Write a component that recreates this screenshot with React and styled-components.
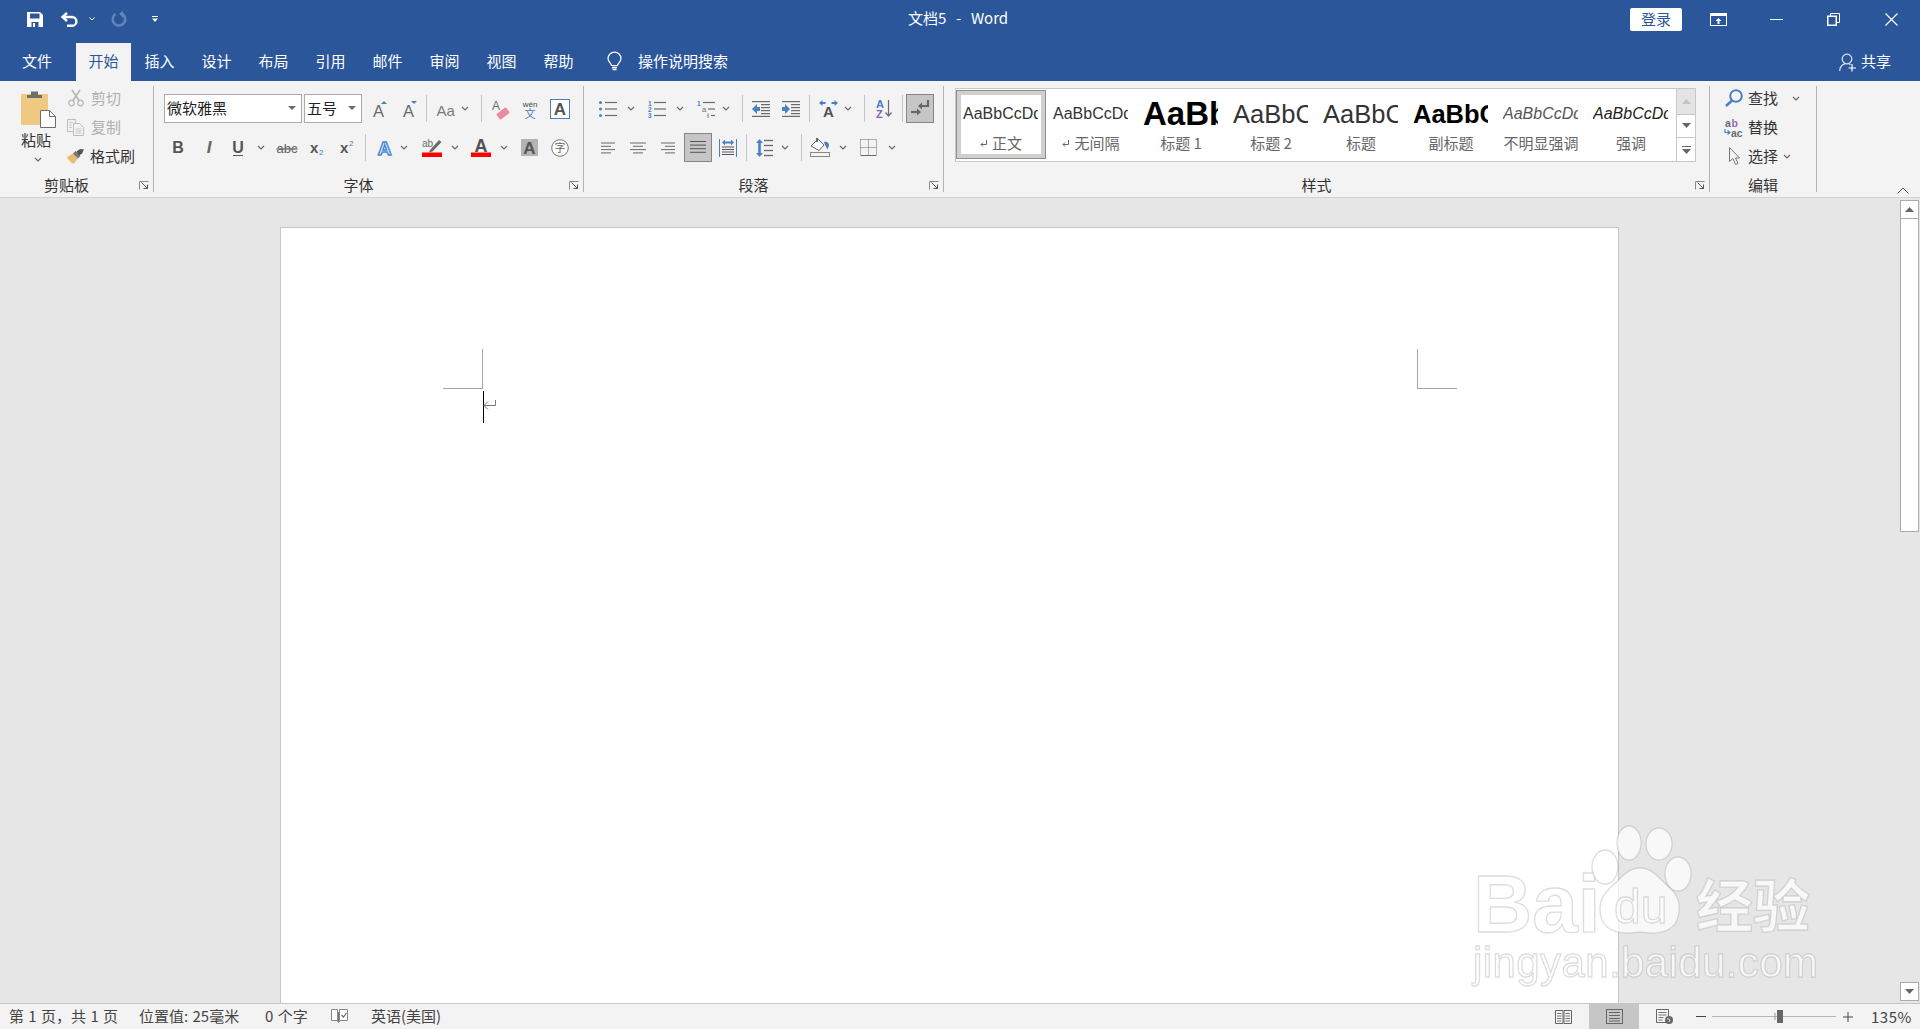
import React from 'react';
import styled, { createGlobalStyle } from 'styled-components';

const GlobalStyle = createGlobalStyle`
  html, body, #root { margin: 0; padding: 0; height: 100%; overflow: hidden; }
  body { font-family: "Noto Sans CJK SC", "Liberation Sans", sans-serif; color: #333; }
  svg { display: block; overflow: visible; }
`;

const Window = styled.div`
  width: 1920px;
  height: 1029px;
  display: flex;
  flex-direction: column;
  overflow: hidden;
  background: #e6e6e6;
`;

const Header = styled.header`
  background: #2b579a;
  color: #fff;
  font-size: 15px;
  line-height: 18px;
  flex: none;
`;

const TitleBar = styled.div`
  height: 38px;
  margin-bottom: 5px;
  display: grid;
  grid-template-columns: 1fr auto 1fr;
  align-items: center;
`;

const QuickAccess = styled.div`
  display: flex;
  align-items: center;
  padding-left: 27px;
`;

const DocTitle = styled.div`
  font-size: 15px;
  padding: 0 4px 2px 0;
  white-space: pre;
  word-spacing: 1.5px;
`;

const WindowControls = styled.div`
  display: flex;
  align-items: center;
  justify-content: flex-end;
`;

const LoginButton = styled.button`
  width: 52px;
  height: 23px;
  margin-right: 8px;
  border: none;
  border-radius: 2px;
  background: #fff;
  color: #2b579a;
  font: 15px/21px "Noto Sans CJK SC", sans-serif;
  padding: 0 0 2px;
`;

const WinButton = styled.div`
  width: 57.5px;
  height: 38px;
  display: flex;
  align-items: center;
  justify-content: center;
`;

const TabRow = styled.nav`
  height: 38px;
  display: flex;
  align-items: stretch;
`;

const Tab = styled.div`
  width: ${p => p.$w || 57}px;
  margin-left: ${p => p.$ml || 0}px;
  padding-bottom: 2px;
  box-sizing: border-box;
  display: flex;
  align-items: center;
  justify-content: center;
  background: ${p => (p.$active ? '#f3f3f3' : 'transparent')};
  color: ${p => (p.$active ? '#2b579a' : '#fff')};
`;

const SearchBox = styled.div`
  margin-left: 20px;
  padding-bottom: 2px;
  display: flex;
  align-items: center;
  gap: 16px;
`;

const BulbWrap = styled.div`
  margin-top: 2px;
`;

const ShareBox = styled.div`
  margin-left: auto;
  padding: 0 29px 2px 0;
  display: flex;
  align-items: center;
  gap: 4px;
`;

const Ribbon = styled.section`
  height: 116px;
  flex: none;
  display: flex;
  background: #f3f3f3;
  border-bottom: 1px solid #d2d2d2;
  font-size: 15px;
  line-height: 18px;
`;

const Group = styled.div`
  width: ${p => p.$w}px;
  height: 106px;
  margin-top: 5px;
  flex: none;
  display: flex;
  flex-direction: column;
  border-right: 1px solid #b4b4b4;
  box-sizing: border-box;
`;

const GroupBody = styled.div`
  flex: 1;
  min-height: 0;
  display: flex;
`;

const GroupFooter = styled.div`
  height: 16px;
  display: flex;
  align-items: flex-start;
  color: #333;
  line-height: 17px;
`;

const GroupLabel = styled.div`
  flex: 1;
  text-align: center;
`;

const Launcher = styled.div`
  width: 20px;
  padding: 5px 0 0 6px;
  box-sizing: border-box;
`;

const PasteColumn = styled.div`
  width: 67px;
  padding: 4px 0 0 21px;
  box-sizing: border-box;
  display: flex;
  flex-direction: column;
`;

const PasteLabel = styled.div`
  margin-top: 2px;
  line-height: 20px;
`;

const PasteChevron = styled.div`
  margin: 7px 0 0 13px;
`;

const CommandColumn = styled.div`
  display: flex;
  flex-direction: column;
  gap: 5px;
`;

const CommandRow = styled.div`
  height: 24px;
  display: flex;
  align-items: center;
  color: ${p => (p.$disabled ? '#b0b0b0' : '#333')};
`;

const ToolStack = styled.div`
  padding: 8px 0 0 ${p => p.$pad || 0}px;
  display: flex;
  flex-direction: column;
  gap: 10px;
`;

const ToolRow = styled.div`
  height: 29px;
  display: flex;
  align-items: center;
`;

const Tool = styled.span`
  width: ${p => p.$w}px;
  margin-left: ${p => p.$ml || 0}px;
  flex: none;
  display: flex;
  align-items: center;
  justify-content: center;
`;

const ToggledTool = styled(Tool)`
  height: 29px;
  box-sizing: border-box;
  background: #c6c6c6;
  border: 1px solid #858585;
`;

const Divider = styled.span`
  width: 1px;
  height: 27px;
  margin-left: ${p => p.$ml}px;
  flex: none;
  background: #c6c6c6;
`;

const Combo = styled.div`
  width: ${p => p.$w}px;
  height: 29px;
  margin-left: ${p => p.$ml || 0}px;
  flex: none;
  box-sizing: border-box;
  background: #fff;
  border: 1px solid #ababab;
  padding: 0 5px 2px 2px;
  display: flex;
  align-items: center;
  justify-content: space-between;
  color: #222;
`;

const Gallery = styled.div`
  width: 741px;
  height: 74px;
  margin: 2px 0 0 11px;
  box-sizing: border-box;
  display: flex;
  background: #fff;
  border: 1px solid #c8c8c8;
`;

const StyleItem = styled.div`
  width: 90px;
  height: 69px;
  margin-top: 1px;
  flex: none;
  padding-top: 3px;
  box-sizing: border-box;
  box-shadow: ${p => (p.$selected ? 'inset 0 0 0 1px #8f8f8f, inset 0 0 0 5px #cfcfcd' : 'none')};
`;

const StylePreview = styled.div`
  width: 75px;
  height: 42px;
  margin-left: 7px;
  overflow: hidden;
  white-space: nowrap;
  display: flex;
  align-items: center;
  font-family: "Liberation Sans", sans-serif;
  font-size: ${p => p.$size}px;
  font-weight: ${p => (p.$bold ? 700 : 400)};
  font-style: ${p => (p.$italic ? 'italic' : 'normal')};
  color: ${p => p.$color || '#333'};
`;

const StyleLabel = styled.div`
  display: flex;
  align-items: center;
  justify-content: center;
  gap: 5px;
  line-height: 16px;
  font-size: 15px;
  color: #666;
`;

const GalleryScroll = styled.div`
  width: 18px;
  margin-left: auto;
  flex: none;
  display: flex;
  flex-direction: column;
  border-left: 1px solid #c8c8c8;
`;

const ScrollCell = styled.div`
  flex: ${p => p.$flex || 1};
  display: flex;
  align-items: center;
  justify-content: center;
  background: ${p => (p.$muted ? '#e4e4e4' : '#fff')};
  border-top: ${p => (p.$first ? 'none' : '1px solid #c8c8c8')};
`;

const RibbonTail = styled.div`
  flex: 1;
  display: flex;
  align-items: flex-end;
  justify-content: flex-end;
  padding: 0 11px 3px 0;
`;

const Workspace = styled.main`
  flex: 1;
  min-height: 0;
  position: relative;
  display: flex;
  overflow: hidden;
  background: #e6e6e6;
`;

const Page = styled.div`
  width: 1339px;
  margin: 29px 0 0 280px;
  flex: none;
  box-sizing: border-box;
  background: #fff;
  border: 1px solid #c6c6c6;
  border-bottom: none;
  padding-top: 121px;
`;

const CropRow = styled.div`
  display: flex;
  justify-content: space-between;
  padding: 0 161px 0 162px;
`;

const CropMark = styled.div`
  width: 39px;
  height: 39px;
  border-bottom: 1px solid #a6a6a6;
  ${p => (p.$right ? 'border-left' : 'border-right')}: 1px solid #a6a6a6;
`;

const TextLine = styled.div`
  margin: 2px 0 0 202px;
  display: flex;
`;

const Caret = styled.div`
  width: 1px;
  height: 32px;
  background: #000;
`;

const Pilcrow = styled.div`
  margin: 9px 0 0 -1px;
`;

const Scrollbar = styled.div`
  width: 19px;
  margin: 2px 1px 2px auto;
  flex: none;
  display: flex;
  flex-direction: column;
`;

const ScrollButton = styled.div`
  height: 19px;
  flex: none;
  margin-top: ${p => (p.$end ? 'auto' : 0)};
  box-sizing: border-box;
  background: #fff;
  border: 1px solid #ababab;
  display: flex;
  align-items: center;
  justify-content: center;
`;

const ScrollThumb = styled.div`
  height: 313px;
  flex: none;
  box-sizing: border-box;
  background: #fff;
  border: 1px solid #ababab;
  border-top: none;
`;

const Watermark = styled.div`
  position: absolute;
  left: 1465px;
  top: 620px;
  pointer-events: none;
`;

const StatusBar = styled.footer`
  height: 26px;
  flex: none;
  box-sizing: border-box;
  display: flex;
  align-items: stretch;
  background: #f3f3f3;
  border-top: 1px solid #c6c6c6;
  padding-left: 9px;
  font-size: 15px;
  line-height: 25px;
  color: #444;
`;

const StatusItem = styled.div`
  width: ${p => p.$w}px;
  flex: none;
  display: flex;
  align-items: center;
  padding-bottom: 2px;
  box-sizing: border-box;
  white-space: pre;
  word-spacing: 1px;
`;

const StatusRight = styled.div`
  margin-left: auto;
  display: flex;
  align-items: stretch;
`;

const ViewButton = styled.div`
  width: ${p => p.$w}px;
  margin-left: ${p => p.$ml || 0}px;
  flex: none;
  display: flex;
  align-items: center;
  justify-content: center;
  background: ${p => (p.$active ? '#c6c6c6' : 'transparent')};
`;

const ZoomTrack = styled.div`
  width: 124px;
  margin-left: 6px;
  flex: none;
  display: flex;
  align-items: center;
`;

const ZoomValue = styled.div`
  width: 49px;
  margin-left: 18px;
  letter-spacing: 0.5px;
`;

const GRAY = '#6a6a6a';
const BLUE = '#4a80bf';
const LATIN = '"Liberation Sans", sans-serif';

const Svg = ({ w, h, children }) => (
  <svg width={w} height={h} viewBox={`0 0 ${w} ${h}`} fill="none">{children}</svg>
);

const Chev = () => (
  <Svg w={8} h={5}><path d="M1 1l3 3 3-3" stroke={GRAY} strokeWidth="1.2" /></Svg>
);
const ChevTool = ({ ml }) => <Tool $w={8} $ml={ml}><Chev /></Tool>;
const Tri = () => <Svg w={8} h={4}><path d="M0 0h8L4 4z" fill={GRAY} /></Svg>;

const LauncherIcon = () => (
  <Svg w={10} h={9}>
    <path d="M.5 8.5v-8h9" stroke="#8a8a8a" />
    <path d="M2.5 1.5l6 6M8.5 3.5v4h-4" stroke="#555" />
  </Svg>
);

const Lines = ({ w, ys, x = 0, color = GRAY, sw = 1.2 }) =>
  ys.map(y => <path key={y} d={`M${x} ${y}h${w}`} stroke={color} strokeWidth={sw} />);

const SaveIcon = () => (
  <Svg w={16} h={15}>
    <path d="M0 0h13l3 3v12H0z" fill="#fff" />
    <path d="M3 1.5h9.5v5H3z" fill="#2b579a" />
    <path d="M4.5 10h7v5h-7z" fill="#2b579a" />
    <path d="M6 11h2v4H6z" fill="#fff" />
  </Svg>
);
const UndoIcon = () => (
  <Svg w={17} h={15}>
    <path d="M6 1L1.500 5 6 9" stroke="#fff" strokeWidth="2.400" />
    <path d="M2.500 5H11a4.400 4.400 0 0 1 0 8.800H6" stroke="#fff" strokeWidth="2.400" />
  </Svg>
);
const RedoIcon = () => (
  <Svg w={16} h={16}>
    <path d="M4.500 3a6.300 6.300 0 1 0 6 -.5" stroke="#6384b8" strokeWidth="2.600" />
    <path d="M12 0v7L8 2.500z" fill="#6384b8" />
  </Svg>
);
const CustomizeIcon = () => (
  <Svg w={6} h={6}>
    <path d="M0 .5h6" stroke="#fff" />
    <path d="M0 2.5h6L3 6z" fill="#fff" />
  </Svg>
);
const BulbIcon = () => (
  <Svg w={15} h={20}>
    <path d="M4.500 13.500C4 11 1 9.800 1 6.600a6.500 6.500 0 0 1 13 0c0 3.200-3 4.400-3.500 6.900z" stroke="#fff" strokeWidth="1.200" />
    <path d="M5 15.500h5M5.500 17.500h4" stroke="#fff" strokeWidth="1.300" />
  </Svg>
);
const RibbonDisplayIcon = () => (
  <Svg w={17} h={13}>
    <rect x=".5" y=".5" width="16" height="12" stroke="#fff" />
    <path d="M1 1h15v2H1z" fill="#fff" />
    <path d="M8.500 5l3 3h-2v3h-2V8h-2z" fill="#fff" />
  </Svg>
);
const MinimizeIcon = () => <Svg w={13} h={1}><path d="M0 .5h13" stroke="#fff" /></Svg>;
const RestoreIcon = () => (
  <Svg w={13} h={13}>
    <path d="M3.500 3V.5h9v9H10" stroke="#fff" />
    <rect x=".75" y="3.250" width="8.500" height="9" stroke="#fff" strokeWidth="1.500" />
  </Svg>
);
const CloseIcon = () => <Svg w={13} h={13}><path d="M.5.5l12 12M12.500.5l-12 12" stroke="#fff" strokeWidth="1.200" /></Svg>;
const ShareIcon = () => (
  <Svg w={18} h={19}>
    <circle cx="8" cy="6" r="4.800" stroke="#dfe7f3" strokeWidth="1.200" />
    <path d="M.7 18c0-4 2.600-6.500 5.500-7.400M10 11l1.500.6" stroke="#dfe7f3" strokeWidth="1.200" />
    <path d="M13 11v7.500M9.500 15h7.500" stroke="#fff" strokeWidth="1.200" />
  </Svg>
);

const PasteIcon = () => (
  <Svg w={35} h={38}>
    <rect x="0" y="4" width="27" height="31" rx="1" fill="#efc981" />
    <path d="M6 5h15v3H6zM10 1.500h7V5h-7z" fill="#6e6e6e" />
    <path d="M19.500 20.500h9l6 6v11h-15z" fill="#fff" stroke="#6e6e6e" />
    <path d="M28.500 20.500v6h6" stroke="#6e6e6e" />
  </Svg>
);
const ScissorsIcon = () => (
  <Svg w={16} h={18}>
    <circle cx="3.500" cy="14" r="2.700" stroke="#bdbdbd" strokeWidth="1.400" />
    <circle cx="12.500" cy="14" r="2.700" stroke="#bdbdbd" strokeWidth="1.400" />
    <path d="M5 11.500L12 1M11 11.500L4 1" stroke="#b5b5b5" strokeWidth="1.600" />
  </Svg>
);
const CopyIcon = () => (
  <Svg w={17} h={17}>
    <path d="M.5.5h8v12h-8z" fill="#f3f3f3" stroke="#bdbdbd" />
    <path d="M6.500 4.500h6l4 4v8h-10z" fill="#f3f3f3" stroke="#bdbdbd" />
    <path d="M2 3.500h4M2 6h3M2 8.500h3M8.500 10h6M8.500 12h6M8.500 14h6" stroke="#c8c8c8" />
  </Svg>
);
const BrushIcon = () => (
  <Svg w={18} h={15}>
    <path d="M0 8l6-3.500 5 5-4.500 5.500C5 14 2 12 0 8z" fill="#e8bd73" />
    <path d="M6 4.500L8.500 2l5 5-2.500 2.500z" fill="#777" />
    <path d="M9.500 2.500L13 0l4 .5-2 4-3 2z" fill="#555" />
  </Svg>
);

const GrowIcon = ({ down }) => (
  <Svg w={14} h={16}>
    <text x="0" y="16" fontFamily={LATIN} fontSize="16.500" fill={GRAY}>A</text>
    <path d={down ? 'M8 0h6l-3 3z' : 'M8 3h6l-3-3z'} fill={BLUE} />
  </Svg>
);
const CaseIcon = () => (
  <Svg w={17} h={14}>
    <text x="-.5" y="13.500" fontFamily={LATIN} fontSize="15" fill="#7a7a7a">Aa</text>
  </Svg>
);
const EraserIcon = () => (
  <Svg w={18} h={20}>
    <text x="0" y="11" fontFamily={LATIN} fontSize="12" fill={GRAY}>A</text>
    <rect x="5" y="11" width="12" height="7" rx="1" fill="#e88c9e" transform="rotate(-38 11 14.500)" />
  </Svg>
);
const PinyinIcon = () => (
  <Svg w={16} h={18}>
    <text x="8" y="7" textAnchor="middle" fontFamily={LATIN} fontSize="8" fill="#444">wén</text>
    <text x="8" y="18" textAnchor="middle" fontFamily='"Noto Sans CJK SC"' fontSize="11" fill={BLUE}>文</text>
  </Svg>
);
const BorderAIcon = () => (
  <Svg w={20} h={20}>
    <rect x=".5" y=".5" width="19" height="19" fill="#fff" stroke={BLUE} />
    <text x="10" y="16" textAnchor="middle" fontFamily={LATIN} fontWeight="700" fontSize="17" fill="#555">A</text>
  </Svg>
);
const Letter = ({ w, children, color = '#555', size = 16, bold, italic, underline, through }) => (
  <Svg w={w} h={16}>
    <text x={w / 2} y="13" textAnchor="middle" fontFamily={LATIN} fontSize={size} fontWeight={bold ? 700 : 400}
      fontStyle={italic ? 'italic' : 'normal'} fill={color} textDecoration={through ? 'line-through' : 'none'}>{children}</text>
    {underline && <path d={`M0 15.500h${w}`} stroke={color} />}
  </Svg>
);
const ScriptIcon = ({ sup }) => (
  <Svg w={15} h={15}>
    <text x="0" y="13" fontFamily={LATIN} fontWeight="700" fontSize="15" fill="#555">x</text>
    <text x="9" y={sup ? 6 : 15} fontFamily={LATIN} fontSize="8" fill={BLUE}>2</text>
  </Svg>
);
const EffectIcon = () => (
  <Svg w={15} h={18}>
    <text x="7.500" y="16" textAnchor="middle" fontFamily={LATIN} fontWeight="700" fontSize="19" fill="#fff" stroke="#4a8ad4" strokeWidth="1.500">A</text>
  </Svg>
);
const HighlightIcon = () => (
  <Svg w={20} h={19}>
    <text x="0" y="9" fontFamily={LATIN} fontSize="10" fill={GRAY}>ab</text>
    <path d="M8 12L17 2l2.500 2-9 9.500-3.500 1z" fill={GRAY} />
    <path d="M0 14.500h20V19H0z" fill="#f00" />
  </Svg>
);
const FontColorIcon = () => (
  <Svg w={20} h={19}>
    <text x="10" y="13.500" textAnchor="middle" fontFamily={LATIN} fontWeight="700" fontSize="18" fill="#505050">A</text>
    <path d="M0 14.500h20V19H0z" fill="#f00" />
  </Svg>
);
const ShadedIcon = () => (
  <Svg w={17} h={17}>
    <rect width="17" height="17" fill="#b4b4b4" />
    <text x="8.500" y="15" textAnchor="middle" fontFamily={LATIN} fontWeight="700" fontSize="17" fill="#555">A</text>
  </Svg>
);
const CircleIcon = () => (
  <Svg w={18} h={18}>
    <circle cx="9" cy="9" r="8.300" stroke="#777" fill="#fff" />
    <text x="9" y="13" textAnchor="middle" fontFamily='"Noto Sans CJK SC"' fontSize="11" fill="#666">字</text>
  </Svg>
);

const BulletsIcon = () => (
  <Svg w={18} h={18}>
    {[2.500, 9, 15.500].map(y => <circle key={y} cx="1.500" cy={y} r="1.500" fill={BLUE} />)}
    <Lines x={6} w={12} ys={[2.500, 9, 15.500]} />
  </Svg>
);
const NumberedIcon = ({ labels = ['1', '2', '3'] }) => (
  <Svg w={18} h={18}>
    {labels.map((t, i) => (
      <text key={t} x="0" y={5.500 + i * 6.300} fontFamily={LATIN} fontWeight="700" fontSize="6.500" fill={BLUE}>{t}</text>
    ))}
    <Lines x={6} w={12} ys={[2.500, 9, 15.500]} />
  </Svg>
);
const MultilevelIcon = () => (
  <Svg w={18} h={18}>
    <text x="0" y="6" fontFamily={LATIN} fontWeight="700" fontSize="6.500" fill={BLUE}>1</text>
    <text x="5" y="12" fontFamily={LATIN} fontSize="7.500" fill={GRAY}>a</text>
    <text x="10" y="18" fontFamily={LATIN} fontWeight="700" fontSize="6.500" fill={BLUE}>i</text>
    <Lines x={6} w={12} ys={[2.500]} />
    <Lines x={11} w={7} ys={[9]} />
    <Lines x={14} w={4} ys={[15.500]} />
  </Svg>
);
const IndentIcon = ({ out }) => (
  <Svg w={18} h={16}>
    <Lines w={18} ys={[.600, 15.400]} />
    <Lines x={9} w={9} ys={[3.600, 6.600, 9.600, 12.600]} />
    <path d={out ? 'M5 3L0 8l5 5v-3h3V6H5z' : 'M3 3l5 5-5 5v-3H0V6h3z'} fill={BLUE} />
  </Svg>
);
const TextDirIcon = () => (
  <Svg w={19} h={17}>
    <path d="M0 3l3.500-3v2h3v2h-3v2zM19 3l-3.500-3v2h-3v2h3v2z" fill={BLUE} />
    <text x="9.500" y="17" textAnchor="middle" fontFamily={LATIN} fontWeight="700" fontSize="15" fill="#505050">A</text>
  </Svg>
);
const SortIcon = () => (
  <Svg w={16} h={19}>
    <text x="0" y="9" fontFamily={LATIN} fontSize="11" fontWeight="700" fill={BLUE}>A</text>
    <text x="0" y="19" fontFamily={LATIN} fontSize="11" fontWeight="700" fill="#8a5fb0">Z</text>
    <path d="M12.500 1v16M9.500 13.500l3 3.500 3-3.500" stroke={GRAY} strokeWidth="1.200" />
  </Svg>
);
const ShowMarksIcon = () => (
  <Svg w={18} h={17}>
    <path d="M17 0v6h-8" stroke="#666" strokeWidth="2.200" />
    <path d="M11 2.500L7 6l4 3.500z" fill="#666" />
    <path d="M0 12h8" stroke="#666" strokeWidth="2.200" />
    <path d="M6 8.500l4 3.500-4 3.500z" fill="#666" />
  </Svg>
);
const AlignIcon = ({ w, widths }) => (
  <Svg w={w} h={12}>
    {widths.map(([x, len], i) => <path key={i} d={`M${x} ${1 + i * 3.300}h${len}`} stroke={GRAY} />)}
  </Svg>
);
const JustifyIcon = () => (
  <Svg w={16} h={13}>
    <Lines w={16} ys={[.500, 4.100, 7.700, 11.300]} color="#555" sw={1} />
  </Svg>
);
const DistributeIcon = () => (
  <Svg w={18} h={18}>
    <path d="M.5 0v18M17.500 0v18" stroke={BLUE} />
    <path d="M3 3.500l3-3v2h6v-2l3 3-3 3v-2H6v2z" fill={BLUE} />
    <Lines x={3} w={12} ys={[8, 10.500, 13, 15.500]} color="#555" sw={1} />
  </Svg>
);
const SpacingIcon = () => (
  <Svg w={17} h={18}>
    <path d="M3.500 0L7 4H4.800v10H7l-3.500 4L0 14h2.200V4H0z" fill={BLUE} />
    <Lines x={8} w={9} ys={[1.500, 6.500, 11.500, 16.500]} sw={1.300} />
  </Svg>
);
const ShadingIcon = () => (
  <Svg w={20} h={19}>
    <path d="M1 8l7-7 6 6-5 5.500z" fill="#fff" stroke="#666" />
    <path d="M6 0h2v4H6z" fill="#666" />
    <path d="M14 4c3-1 5 1 5 3.500l-1.500 4L15 7z" fill={BLUE} />
    <rect x=".5" y="14.500" width="19" height="4" fill="#f3f3f3" stroke="#888" />
  </Svg>
);
const BordersIcon = () => (
  <Svg w={17} h={17}>
    <path d="M.5.5h16M.5.5v16M16.500.5v16M.5 8.500h16M8.500.5v16" stroke="#666" strokeDasharray="1 1" />
    <path d="M.5 16.500h16" stroke="#666" />
  </Svg>
);

const FindIcon = () => (
  <Svg w={18} h={18}>
    <circle cx="11" cy="7" r="5.800" stroke={BLUE} strokeWidth="2" />
    <path d="M7 11.500L1 17" stroke={BLUE} strokeWidth="2.500" />
  </Svg>
);
const ReplaceIcon = () => (
  <Svg w={20} h={19}>
    <text x="1" y="9" fontFamily={LATIN} fontWeight="700" fontSize="10.500" fill={GRAY}>a</text>
    <text x="7.500" y="9" fontFamily={LATIN} fontWeight="700" fontSize="10.500" fill="#9a6cc0">b</text>
    <text x="7" y="18.500" fontFamily={LATIN} fontWeight="700" fontSize="10.500" fill={GRAY}>ac</text>
    <path d="M1 11v3.500h5M3.500 12.500l2.500 2-2.500 2" stroke={BLUE} strokeWidth="1.200" />
  </Svg>
);
const SelectIcon = () => (
  <Svg w={11} h={18}>
    <path d="M.5.500v14l3.500-3 2.500 6 2.500-1-2.500-5.500h4z" fill="#f3f3f3" stroke="#777" />
  </Svg>
);
const Triangle = ({ color = '#666', down }) => (
  <Svg w={9} h={5}><path d={down ? 'M0 0h9L4.500 5z' : 'M0 5h9L4.500 0z'} fill={color} /></Svg>
);
const MoreIcon = () => (
  <Svg w={9} h={8}>
    <path d="M0 .5h9" stroke="#666" />
    <path d="M0 3h9L4.500 8z" fill="#666" />
  </Svg>
);
const ReturnMark = () => (
  <Svg w={7} h={7}>
    <path d="M6.500 0v4.500H1M3 2.500l-2 2 2 2" stroke="#666" />
  </Svg>
);
const CollapseIcon = () => <Svg w={12} h={7}><path d="M.5 6.500L6 1l5.500 5.500" stroke="#555" /></Svg>;

const ProofIcon = () => (
  <Svg w={17} h={14}>
    <path d="M.5.5h6v11h-6zM8.500.5h8v11h-8z" stroke="#888" fill="#fff" />
    <path d="M10.500 6l2 2 3-4" stroke="#666" strokeWidth="1.200" />
    <path d="M7.500 3v10M6 11.500l1.500 2 1.500-2" stroke="#777" />
  </Svg>
);
const ReadIcon = () => (
  <Svg w={17} h={14}>
    <path d="M.5.5h7.500v13H.5zM9 .5h7.500v13H9z" stroke="#666" />
    <path d="M2 3.500h4.500M2 6h4.500M2 8.500h4.500M2 11h4.500M10.500 3.500H15M10.500 6H15M10.500 8.500H15M10.500 11H15" stroke="#777" />
  </Svg>
);
const PrintViewIcon = () => (
  <Svg w={17} h={15}>
    <rect x=".5" y=".5" width="16" height="14" stroke="#666" />
    <path d="M3 3.500h11M3 6.500h11M3 9.500h11M3 12h11" stroke="#666" />
  </Svg>
);
const WebViewIcon = () => (
  <Svg w={17} h={15}>
    <path d="M.5.5h12v13H.5z" stroke="#666" />
    <path d="M2.500 3.500h8M2.500 6h8M2.500 8.500h5M2.500 11h4" stroke="#777" />
    <circle cx="13" cy="11" r="4" fill="#666" />
    <path d="M11 10c1-1 2 1 3 0M13 13l1-2" stroke="#f3f3f3" />
  </Svg>
);
const ZoomSlider = () => (
  <Svg w={124} h={13}>
    <path d="M0 6.500h124" stroke="#b5b5b5" />
    <path d="M63 3v7" stroke="#999" />
    <rect x="65" y="0" width="6" height="13" fill="#666" />
  </Svg>
);
const MinusIcon = () => <Svg w={10} h={1}><path d="M0 .5h10" stroke="#444" /></Svg>;
const PlusIcon = () => <Svg w={10} h={10}><path d="M0 5h10M5 0v10" stroke="#444" /></Svg>;

const wmShape = { fill: '#fff', fillOpacity: 0.72, stroke: '#8d8d8d', strokeOpacity: 0.3, strokeWidth: 1.3, filter: 'url(#wmBlur)' };

const BaiduWatermark = () => (
  <svg width="360" height="180" viewBox="0 -20 360 180">
    <defs>
      <filter id="wmBlur"><feGaussianBlur stdDeviation="0.5" /></filter>
    </defs>
    <text x="8" y="94" fontFamily={LATIN} fontWeight="700" fontSize="82" {...wmShape}>Bai</text>
    <ellipse cx="140" cy="29" rx="13" ry="17" {...wmShape} />
    <ellipse cx="164" cy="5" rx="12" ry="17" {...wmShape} />
    <ellipse cx="194" cy="6" rx="13" ry="16" {...wmShape} />
    <ellipse cx="213" cy="36" rx="13" ry="17" {...wmShape} />
    <path d="M175 30c14 0 20 12 30 20 9 8 12 18 7 32-5 12-18 15-37 12-18 3-33 0-38-12-5-14-1-24 8-32 10-8 16-20 30-20z" {...wmShape} />
    <text x="149" y="85" fontFamily={LATIN} fontSize="48" {...wmShape}>du</text>
    <text x="231" y="89" fontFamily='"Noto Sans CJK SC", sans-serif' fontWeight="700" fontSize="57" {...wmShape}>经验</text>
    <text x="8" y="139" fontFamily={LATIN} fontSize="42" letterSpacing=".4" {...wmShape}>jingyan.baidu.com</text>
  </svg>
);

const tabs = ['插入', '设计', '布局', '引用', '邮件', '审阅', '视图', '帮助'];

const styleItems = [
  { name: '正文', sample: 'AaBbCcDd', size: 16, mark: true, selected: true },
  { name: '无间隔', sample: 'AaBbCcDd', size: 16, mark: true },
  { name: '标题 1', sample: 'AaBbCc', size: 33, bold: true, color: '#000' },
  { name: '标题 2', sample: 'AaBbCc', size: 25.5 },
  { name: '标题', sample: 'AaBbCc', size: 25.5 },
  { name: '副标题', sample: 'AaBbCc', size: 25.5, bold: true, color: '#000' },
  { name: '不明显强调', sample: 'AaBbCcDd', size: 16, italic: true, color: '#555' },
  { name: '强调', sample: 'AaBbCcDd', size: 16, italic: true, color: '#222' },
];

export default function App() {
  return (
    <Window>
      <GlobalStyle />
      <Header>
        <TitleBar>
          <QuickAccess>
            <Tool $w={16}><SaveIcon /></Tool>
            <Tool $w={17} $ml={18}><UndoIcon /></Tool>
            <Tool $w={6} $ml={11}><Svg w={6} h={4}><path d="M.5.5L3 3 5.500.5" stroke="#fff" /></Svg></Tool>
            <Tool $w={16} $ml={16}><RedoIcon /></Tool>
            <Tool $w={6} $ml={25}><CustomizeIcon /></Tool>
          </QuickAccess>
          <DocTitle>文档5  -  Word</DocTitle>
          <WindowControls>
            <LoginButton>登录</LoginButton>
            <WinButton><RibbonDisplayIcon /></WinButton>
            <WinButton><MinimizeIcon /></WinButton>
            <WinButton><RestoreIcon /></WinButton>
            <WinButton><CloseIcon /></WinButton>
          </WindowControls>
        </TitleBar>
        <TabRow>
          <Tab $w={74}>文件</Tab>
          <Tab $w={55} $ml={2} $active>开始</Tab>
          {tabs.map(t => <Tab key={t}>{t}</Tab>)}
          <SearchBox>
            <BulbWrap><BulbIcon /></BulbWrap>
            操作说明搜索
          </SearchBox>
          <ShareBox>
            <BulbWrap><ShareIcon /></BulbWrap>
            共享
          </ShareBox>
        </TabRow>
      </Header>

      <Ribbon>
        <Group $w={154}>
          <GroupBody>
            <PasteColumn>
              <PasteIcon />
              <PasteLabel>粘贴</PasteLabel>
              <PasteChevron><Chev /></PasteChevron>
            </PasteColumn>
            <CommandColumn>
              <CommandRow $disabled><Tool $w={17}><ScissorsIcon /></Tool><Tool $w={30} $ml={7}>剪切</Tool></CommandRow>
              <CommandRow $disabled><Tool $w={17}><CopyIcon /></Tool><Tool $w={30} $ml={7}>复制</Tool></CommandRow>
              <CommandRow><Tool $w={18}><BrushIcon /></Tool><Tool $w={45} $ml={5}>格式刷</Tool></CommandRow>
            </CommandColumn>
          </GroupBody>
          <GroupFooter>
            <GroupLabel>剪贴板</GroupLabel>
            <Launcher><LauncherIcon /></Launcher>
          </GroupFooter>
        </Group>

        <Group $w={430}>
          <GroupBody>
            <ToolStack $pad={10}>
              <ToolRow>
                <Combo $w={138}>微软雅黑<Tri /></Combo>
                <Combo $w={58} $ml={2}>五号<Tri /></Combo>
                <Tool $w={14} $ml={11}><GrowIcon /></Tool>
                <Tool $w={14} $ml={16}><GrowIcon down /></Tool>
                <Divider $ml={9} />
                <Tool $w={17} $ml={10}><CaseIcon /></Tool>
                <ChevTool ml={7} />
                <Divider $ml={12} />
                <Tool $w={18} $ml={10}><EraserIcon /></Tool>
                <Tool $w={16} $ml={12}><PinyinIcon /></Tool>
                <Tool $w={20} $ml={12}><BorderAIcon /></Tool>
              </ToolRow>
              <ToolRow>
                <Tool $w={10} $ml={9}><Letter w={10} bold>B</Letter></Tool>
                <Tool $w={10} $ml={21}><Letter w={10} bold italic size={17} color="#666">I</Letter></Tool>
                <Tool $w={10} $ml={19}><Letter w={10} bold underline>U</Letter></Tool>
                <ChevTool ml={14} />
                <Tool $w={20} $ml={12}><Letter w={20} size={13} through color="#666">abc</Letter></Tool>
                <Tool $w={15} $ml={13}><ScriptIcon /></Tool>
                <Tool $w={15} $ml={15}><ScriptIcon sup /></Tool>
                <Divider $ml={10} />
                <Tool $w={15} $ml={11}><EffectIcon /></Tool>
                <ChevTool ml={8} />
                <Tool $w={20} $ml={14}><HighlightIcon /></Tool>
                <ChevTool ml={9} />
                <Tool $w={20} $ml={12}><FontColorIcon /></Tool>
                <ChevTool ml={9} />
                <Tool $w={17} $ml={13}><ShadedIcon /></Tool>
                <Tool $w={18} $ml={13}><CircleIcon /></Tool>
              </ToolRow>
            </ToolStack>
          </GroupBody>
          <GroupFooter>
            <GroupLabel>字体</GroupLabel>
            <Launcher><LauncherIcon /></Launcher>
          </GroupFooter>
        </Group>

        <Group $w={360}>
          <GroupBody>
            <ToolStack>
              <ToolRow>
                <Tool $w={18} $ml={15}><BulletsIcon /></Tool>
                <ChevTool ml={10} />
                <Tool $w={18} $ml={13}><NumberedIcon /></Tool>
                <ChevTool ml={10} />
                <Tool $w={18} $ml={13}><MultilevelIcon /></Tool>
                <ChevTool ml={7} />
                <Divider $ml={12} />
                <Tool $w={18} $ml={9}><IndentIcon out /></Tool>
                <Tool $w={18} $ml={12}><IndentIcon /></Tool>
                <Divider $ml={9} />
                <Tool $w={19} $ml={9}><TextDirIcon /></Tool>
                <ChevTool ml={6} />
                <Divider $ml={12} />
                <Tool $w={16} $ml={11}><SortIcon /></Tool>
                <Divider $ml={10} />
                <ToggledTool $w={28} $ml={3}><ShowMarksIcon /></ToggledTool>
              </ToolRow>
              <ToolRow>
                <Tool $w={14} $ml={17}><AlignIcon w={14} widths={[[0, 14], [0, 10], [0, 14], [0, 10]]} /></Tool>
                <Tool $w={16} $ml={15}><AlignIcon w={16} widths={[[0, 16], [3, 10], [0, 16], [3, 10]]} /></Tool>
                <Tool $w={14} $ml={15}><AlignIcon w={14} widths={[[0, 14], [4, 10], [0, 14], [4, 10]]} /></Tool>
                <ToggledTool $w={28} $ml={9}><JustifyIcon /></ToggledTool>
                <Tool $w={18} $ml={7}><DistributeIcon /></Tool>
                <Divider $ml={9} />
                <Tool $w={17} $ml={9}><SpacingIcon /></Tool>
                <ChevTool ml={8} />
                <Divider $ml={12} />
                <Tool $w={20} $ml={8}><ShadingIcon /></Tool>
                <ChevTool ml={9} />
                <Tool $w={17} $ml={13}><BordersIcon /></Tool>
                <ChevTool ml={11} />
              </ToolRow>
            </ToolStack>
          </GroupBody>
          <GroupFooter>
            <GroupLabel>段落</GroupLabel>
            <Launcher><LauncherIcon /></Launcher>
          </GroupFooter>
        </Group>

        <Group $w={766}>
          <GroupBody>
            <Gallery>
              {styleItems.map(item => (
                <StyleItem key={item.name} $selected={item.selected}>
                  <StylePreview $size={item.size} $bold={item.bold} $italic={item.italic} $color={item.color}>
                    {item.sample}
                  </StylePreview>
                  <StyleLabel>
                    {item.mark && <ReturnMark />}
                    {item.name}
                  </StyleLabel>
                </StyleItem>
              ))}
              <GalleryScroll>
                <ScrollCell $first $muted $flex={26}><Triangle color="#c4c4c4" /></ScrollCell>
                <ScrollCell $flex={24}><Triangle down /></ScrollCell>
                <ScrollCell $flex={24}><MoreIcon /></ScrollCell>
              </GalleryScroll>
            </Gallery>
          </GroupBody>
          <GroupFooter>
            <GroupLabel>样式</GroupLabel>
            <Launcher><LauncherIcon /></Launcher>
          </GroupFooter>
        </Group>

        <Group $w={107}>
          <GroupBody>
            <CommandColumn>
              <CommandRow><Tool $w={18} $ml={15}><FindIcon /></Tool><Tool $w={30} $ml={5}>查找</Tool><ChevTool ml={14} /></CommandRow>
              <CommandRow><Tool $w={20} $ml={14}><ReplaceIcon /></Tool><Tool $w={30} $ml={4}>替换</Tool></CommandRow>
              <CommandRow><Tool $w={11} $ml={19}><SelectIcon /></Tool><Tool $w={30} $ml={8}>选择</Tool><ChevTool ml={5} /></CommandRow>
            </CommandColumn>
          </GroupBody>
          <GroupFooter>
            <GroupLabel>编辑</GroupLabel>
          </GroupFooter>
        </Group>

        <RibbonTail><CollapseIcon /></RibbonTail>
      </Ribbon>

      <Workspace>
        <Page>
          <CropRow>
            <CropMark />
            <CropMark $right />
          </CropRow>
          <TextLine>
            <Caret />
            <Pilcrow>
              <Svg w={13} h={11}>
                <path d="M12.500 0v5.500H1M5 1.500L1 5.500l4 4" stroke="#777" />
              </Svg>
            </Pilcrow>
          </TextLine>
        </Page>
        <Scrollbar>
          <ScrollButton><Triangle /></ScrollButton>
          <ScrollThumb />
          <ScrollButton $end><Triangle down /></ScrollButton>
        </Scrollbar>
        <Watermark><BaiduWatermark /></Watermark>
      </Workspace>

      <StatusBar>
        <StatusItem $w={130}>第 1 页，共 1 页</StatusItem>
        <StatusItem $w={126}>位置值: 25毫米</StatusItem>
        <StatusItem $w={66}>0 个字</StatusItem>
        <StatusItem $w={40}><ProofIcon /></StatusItem>
        <StatusItem $w={80}>英语(美国)</StatusItem>
        <StatusRight>
          <ViewButton $w={17}><ReadIcon /></ViewButton>
          <ViewButton $w={50} $ml={17} $active><PrintViewIcon /></ViewButton>
          <ViewButton $w={17} $ml={17}><WebViewIcon /></ViewButton>
          <ViewButton $w={10} $ml={23}><MinusIcon /></ViewButton>
          <ZoomTrack><ZoomSlider /></ZoomTrack>
          <ViewButton $w={10} $ml={7}><PlusIcon /></ViewButton>
          <ZoomValue>135%</ZoomValue>
        </StatusRight>
      </StatusBar>
    </Window>
  );
}
